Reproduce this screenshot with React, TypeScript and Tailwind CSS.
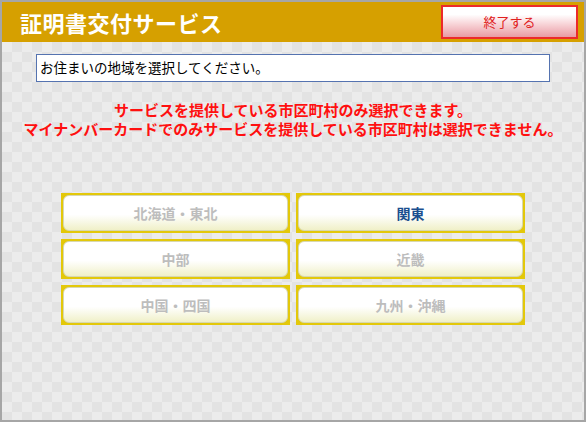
import React from 'react';

// 地域ボタンの定義
const regions = [
  { label: '北海道・東北', active: false },
  { label: '関東', active: true },
  { label: '中部', active: false },
  { label: '近畿', active: false },
  { label: '中国・四国', active: false },
  { label: '九州・沖縄', active: false },
];

const RegionButton: React.FC<{ label: string; active: boolean }> = ({ label, active }) => (
  <div className="h-[40px] bg-[#e3c80a] p-[2px]">
    <div
      className={
        'flex h-full items-center justify-center rounded-[6px] border border-[#d8d8b0] bg-gradient-to-b from-white from-55% to-[#f0f0c8] text-[14px] font-bold ' +
        (active ? 'text-[#1b4f8f]' : 'text-[#bdbdbd]')
      }
    >
      {label}
    </div>
  </div>
);

const App: React.FC = () => {
  return (
    <div
      className="flex h-[422px] w-[586px] flex-col overflow-hidden border-2 border-[#a6a6a6] bg-[#ebebeb] bg-[repeating-conic-gradient(#e3e3e3_0_25%,#ececec_0_50%)] [background-size:20px_20px]"
      style={{ fontFamily: '"Noto Sans CJK JP", "Noto Sans", sans-serif' }}
    >
      {/* ヘッダー */}
      <div className="flex h-[40px] shrink-0 items-center justify-between bg-[#d6a000] pl-[18px] pr-[6px]">
        <h1 className="text-[22px] font-bold leading-none tracking-[0.5px] text-white">証明書交付サービス</h1>
        <button className="flex h-[34px] w-[137px] items-center justify-center border-2 border-[#ec2a2a] bg-gradient-to-b from-white from-25% to-[#e89aa4] text-[13px] text-[#e02020]">
          終了する
        </button>
      </div>

      {/* 案内文 */}
      <div className="px-[34px] pt-[12px]">
        <div className="flex h-[28px] items-center border border-[#5573b0] bg-white pl-[3px] text-[13.5px] leading-none text-black">
          お住まいの地域を選択してください。
        </div>
      </div>

      <div className="mt-[19px] flex flex-col gap-[1px] text-center text-[15px] font-bold leading-[18px] text-[#ff1010]">
        <p>サービスを提供している市区町村のみ選択できます。</p>
        <p>マイナンバーカードでのみサービスを提供している市区町村は選択できません。</p>
      </div>

      {/* 地域選択 */}
      <div className="ml-[59px] mt-[55px] grid w-[464px] grid-cols-2 gap-x-[6px] gap-y-[6px]">
        {regions.map((r) => (
          <RegionButton key={r.label} label={r.label} active={r.active} />
        ))}
      </div>
    </div>
  );
};

export default App;
